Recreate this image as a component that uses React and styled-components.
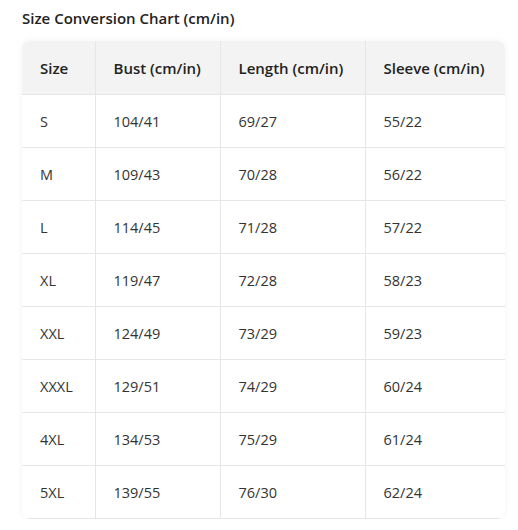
import React from 'react';
import styled, { createGlobalStyle } from 'styled-components';

const GlobalStyle = createGlobalStyle`
  body {
    margin: 0;
    background: #ffffff;
    font-family: "Open Sans", "Noto Sans", sans-serif;
    color: #333;
  }
`;

const rows = [
  ['S', '104/41', '69/27', '55/22'],
  ['M', '109/43', '70/28', '56/22'],
  ['L', '114/45', '71/28', '57/22'],
  ['XL', '119/47', '72/28', '58/23'],
  ['XXL', '124/49', '73/29', '59/23'],
  ['XXXL', '129/51', '74/29', '60/24'],
  ['4XL', '134/53', '75/29', '61/24'],
  ['5XL', '139/55', '76/30', '62/24'],
];

const headers = ['Size', 'Bust (cm/in)', 'Length (cm/in)', 'Sleeve (cm/in)'];
const widths = [73, 125, 145, 140];

const App = () => (
  <Page>
    <GlobalStyle />
    <Title>Size Conversion Chart (cm/in)</Title>
    <TableWrap>
      <Table>
        <colgroup>
          {widths.map((w, i) => <col key={i} style={{ width: w }} />)}
        </colgroup>
        <thead>
          <tr>
            {headers.map((h) => <Th key={h}>{h}</Th>)}
          </tr>
        </thead>
        <tbody>
          {rows.map((r) => (
            <tr key={r[0]}>
              {r.map((c, i) => <Td key={i}>{c}</Td>)}
            </tr>
          ))}
        </tbody>
      </Table>
    </TableWrap>
  </Page>
);

const Page = styled.div`
  padding: 8px 13px 0 22px;
`;

const Title = styled.h3`
  margin: 0 0 13px;
  font-size: 15px;
  font-weight: 600;
  color: #222;
  line-height: 20px;
`;

const TableWrap = styled.div`
  width: 483px;
  border-radius: 8px;
  overflow: hidden;
  box-shadow: 0 0 6px rgba(0, 0, 0, 0.06);
`;

const Table = styled.table`
  width: 100%;
  border-collapse: collapse;
  table-layout: fixed;
`;

const Th = styled.th`
  height: 53px;
  padding: 0 0 0 18px;
  text-align: left;
  font-size: 15px;
  font-weight: 600;
  color: #222;
  background: #f3f3f3;
  border-right: 1px solid #e6e6e6;
  border-bottom: 1px solid #e6e6e6;

  &:last-child {
    border-right: none;
  }
`;

const Td = styled.td`
  height: 52px;
  padding: 0 0 0 18px;
  font-size: 14.5px;
  color: #333;
  border-right: 1px solid #e6e6e6;
  border-bottom: 1px solid #e6e6e6;

  &:last-child {
    border-right: none;
  }
`;

export default App;
